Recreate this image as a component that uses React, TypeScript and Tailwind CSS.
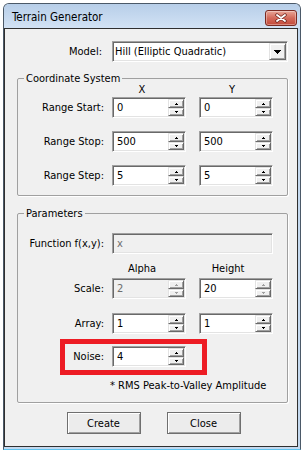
import React from "react";

// classic win32 bevels
const sunken =
  "border border-t-[#a0a0a0] border-l-[#a0a0a0] border-b-white border-r-white p-px shadow-[inset_1px_1px_0_#696969,inset_-1px_-1px_0_#e3e3e3]";
const raised =
  "border border-t-[#e3e3e3] border-l-[#e3e3e3] border-b-[#696969] border-r-[#696969] bg-[#f0f0f0] shadow-[inset_1px_1px_0_#fff,inset_-1px_-1px_0_#a0a0a0]";

function Arrow({ up, dim }: { up?: boolean; dim?: boolean }) {
  return (
    <svg width="3" height="2" viewBox="0 0 3 2" shapeRendering="crispEdges" className="block">
      <g fill={dim ? "#a0a0a0" : "#000"}>
        <rect x={1} y={up ? 0 : 1} width={1} height={1} />
        <rect x={0} y={up ? 1 : 0} width={3} height={1} />
      </g>
    </svg>
  );
}

function SpinBox({ value, disabled, dimArrows }: { value: string; disabled?: boolean; dimArrows?: boolean }) {
  return (
    <div className={`${sunken} w-[74px] h-[21px] flex ${disabled ? "bg-[#f0f0f0]" : "bg-white"}`}>
      <div className={`flex-1 flex items-center pl-[3px] ${disabled ? "text-[#6d6d6d]" : "text-black"}`}>{value}</div>
      <div className="w-[16px] flex flex-col">
        <div className={`${raised} h-[9px] flex items-center justify-center`}>
          <Arrow up dim={disabled || dimArrows} />
        </div>
        <div className={`${raised} h-[8px] flex items-center justify-center`}>
          <Arrow dim={disabled || dimArrows} />
        </div>
      </div>
    </div>
  );
}

function Row({ label, children, className = "" }: { label: string; children: React.ReactNode; className?: string }) {
  return (
    <div className={`flex items-center ${className}`}>
      <div className="w-[86px] text-right">{label}</div>
      <div className="ml-[8px] flex gap-[13px]">{children}</div>
    </div>
  );
}

export default function App() {
  return (
    <div className="w-[306px] h-[455px] bg-white pl-[3px] pt-[3px] text-[11px] leading-[13px] text-black font-[family-name:'DejaVu_Sans_Condensed','Liberation_Sans',sans-serif]">
      <div className="w-[298px] h-[447px] flex flex-col rounded-t-[6px] border border-[#4b5968] border-b-[#5fc3ee] bg-[#c4d9ef]">
        {/* title bar */}
        <div className="h-[24px] flex items-start justify-between pl-[8px] pr-[3px] rounded-t-[5px] bg-linear-to-b from-[#b7cee8] to-[#d2e2f4]">
          <span className="mt-[7px] text-[11.5px]">Terrain Generator</span>
          <div className="mt-[6px] w-[32px] h-[16px] rounded-[3px] border border-[#7a2a22] bg-linear-to-b from-[#e8a698] via-[#d36a5b] to-[#c34a3a] flex items-center justify-center shadow-[inset_0_0_0_1px_rgba(255,255,255,0.35)]">
            <svg width="12" height="10" viewBox="0 0 12 10">
              <path d="M2 2 L10 8 M10 2 L2 8" stroke="#6b231b" strokeWidth="3.4" strokeLinecap="round" />
              <path d="M2 2 L10 8 M10 2 L2 8" stroke="#fff" strokeWidth="1.9" strokeLinecap="round" />
            </svg>
          </div>
        </div>

        {/* client area */}
        <div className="flex-1 mr-[2px] mb-[2px] border border-[#2f2f2f] bg-[#f0f0f0] pt-[12px] pl-[12px] pr-[9px] flex flex-col">
          <div className="flex items-center">
            <div className="w-[87px] text-right pr-[2px]">Model:</div>
            <div className={`${sunken} ml-[8px] w-[176px] h-[21px] flex bg-white`}>
              <div className="flex-1 flex items-center pl-[1px]">Hill (Elliptic Quadratic)</div>
              <div className={`${raised} w-[17px] flex items-center justify-center`}>
                <svg width="7" height="4" viewBox="0 0 7 4" shapeRendering="crispEdges">
                  <path d="M0 0H7V1H6V2H5V3H4V4H3V3H2V2H1V1H0Z" fill="#000" />
                </svg>
              </div>
            </div>
          </div>

          <fieldset className="mt-[10px] border border-[#a0a0a0] rounded-[2px] shadow-[1px_1px_0_#fff] pb-[9px]">
            <legend className="ml-[6px] px-[2px] leading-[13px]">Coordinate System</legend>
            <div className="-mt-[2px] ml-[94px] flex h-[13px]">
              <div className="w-[60px] text-center">X</div>
              <div className="ml-[27px] w-[66px] text-center">Y</div>
            </div>
            <Row label="Range Start:" className="mt-[1px]">
              <SpinBox value="0" />
              <SpinBox value="0" />
            </Row>
            <Row label="Range Stop:" className="mt-[13px]">
              <SpinBox value="500" />
              <SpinBox value="500" />
            </Row>
            <Row label="Range Step:" className="mt-[13px]">
              <SpinBox value="5" />
              <SpinBox value="5" />
            </Row>
          </fieldset>

          <fieldset className="mt-[11px] border border-[#a0a0a0] rounded-[2px] shadow-[1px_1px_0_#fff] pb-[10px]">
            <legend className="ml-[6px] px-[2px] leading-[13px]">Parameters</legend>
            <Row label="Function f(x,y):" className="mt-[13px]">
              <div className={`${sunken} w-[161px] h-[21px] flex items-center pl-[4px] bg-[#f0f0f0] text-[#6d6d6d]`}>x</div>
            </Row>
            <div className="mt-[8px] ml-[94px] flex h-[13px]">
              <div className="w-[60px] text-center">Alpha</div>
              <div className="ml-[27px] w-[58px] text-center">Height</div>
            </div>
            <Row label="Scale:" className="mt-[3px]">
              <SpinBox value="2" disabled />
              <SpinBox value="20" dimArrows />
            </Row>
            <Row label="Array:" className="mt-[14px]">
              <SpinBox value="1" />
              <SpinBox value="1" />
            </Row>
            <div className="relative mt-[12px]">
              <Row label="Noise:">
                <SpinBox value="4" />
              </Row>
              <div className="absolute left-[42px] -top-[7px] w-[147px] h-[36px] border-[5px] border-[#ed1c24]" />
            </div>
            <div className="mt-[12px] ml-[92px]">* RMS Peak-to-Valley Amplitude</div>
          </fieldset>

          <div className="mt-[9px] pl-[2px] flex justify-center gap-[26px]">
            <button className="w-[74px] h-[22px] border border-[#6f6f6f] bg-[#ececec] shadow-[inset_1px_1px_0_#fff,inset_-1px_-1px_0_#a0a0a0]">Create</button>
            <button className="w-[74px] h-[22px] border border-[#6f6f6f] bg-[#ececec] shadow-[inset_1px_1px_0_#fff,inset_-1px_-1px_0_#a0a0a0]">Close</button>
          </div>
        </div>
      </div>
    </div>
  );
}
